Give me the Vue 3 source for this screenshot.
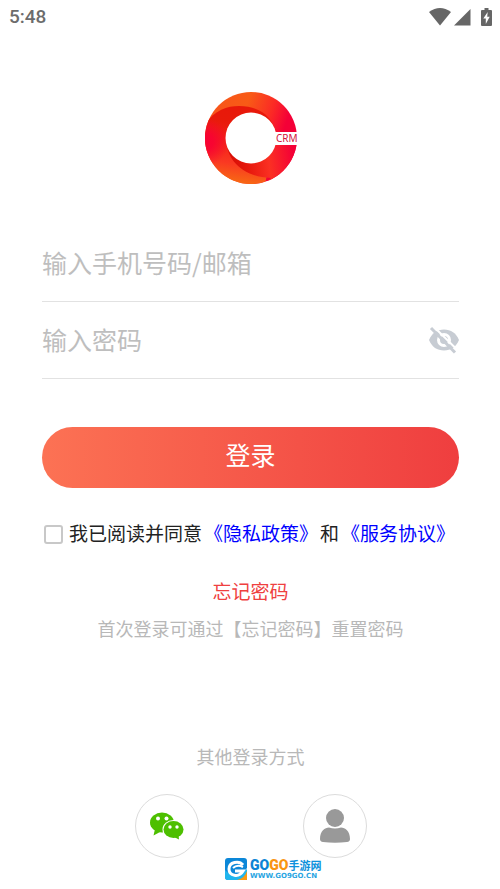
<script setup>
import { ref } from 'vue'

const account = ref('')
const password = ref('')
const visible = ref(false)
const agreed = ref(false)
</script>

<template>
  <div class="page">
    <header class="status">
      <span class="time">5:48</span>
      <div class="status-icons">
        <svg width="22" height="18" viewBox="0 0 22 18" aria-hidden="true">
          <path d="M0 4Q11-4 22 4L11 17.500Z" />
        </svg>
        <svg width="17" height="18" viewBox="0 0 17 18" aria-hidden="true">
          <path d="M16.500 1V17.500H0Z" />
        </svg>
        <svg class="battery" width="11" height="18" viewBox="0 0 11 18" aria-hidden="true">
          <path d="M3.500 0h4v2H10q1 0 1 1v14q0 1-1 1H1q-1 0-1-1V3q0-1 1-1h2.500Z" />
          <path class="bolt" d="M6.700 4 2.300 10.500h2.500V16L8.700 8.800H6.200Z" />
        </svg>
      </div>
    </header>

    <main class="content">
      <svg class="logo" width="92" height="92" viewBox="0 0 92 92" role="img" aria-label="CRM">
        <defs>
          <linearGradient id="ring" gradientUnits="userSpaceOnUse" x1="8" y1="20" x2="90" y2="46">
            <stop offset="0" stop-color="#f8551a" />
            <stop offset="0.350" stop-color="#f85b16" />
            <stop offset="0.650" stop-color="#fb2a25" />
            <stop offset="0.850" stop-color="#f40037" />
          </linearGradient>
          <linearGradient id="left" gradientUnits="userSpaceOnUse" x1="46" y1="14" x2="36" y2="92">
            <stop offset="0" stop-color="#e8180a" />
            <stop offset="0.220" stop-color="#e81a0a" />
            <stop offset="0.480" stop-color="#f22018" />
            <stop offset="0.750" stop-color="#fa3822" />
            <stop offset="1" stop-color="#f76b13" />
          </linearGradient>
          <radialGradient id="edge" gradientUnits="userSpaceOnUse" cx="0" cy="50" r="24">
            <stop offset="0" stop-color="#f80034" />
            <stop offset="0.350" stop-color="#f80034" stop-opacity="0.850" />
            <stop offset="1" stop-color="#f80034" stop-opacity="0" />
          </radialGradient>
          <linearGradient id="right" gradientUnits="userSpaceOnUse" x1="26" y1="68" x2="88" y2="60">
            <stop offset="0" stop-color="#d80f06" />
            <stop offset="0.250" stop-color="#e6180c" />
            <stop offset="0.600" stop-color="#fb3023" />
            <stop offset="1" stop-color="#f40037" />
          </linearGradient>
          <clipPath id="disc"><circle cx="46" cy="46" r="46" /></clipPath>
        </defs>
        <g clip-path="url(#disc)">
          <rect width="92" height="92" fill="url(#ring)" />
          <path d="M0 32C10 18 22 14 34 14C55 14 67 25 71 40L60 92H0Z" fill="url(#left)" />
          <rect width="46" height="92" fill="url(#edge)" />
          <path d="M21 46C21 68 38 85 66 86L60 92H92V46Z" fill="url(#right)" />
        </g>
        <circle cx="46" cy="46" r="25.500" fill="#fff" />
        <path d="M68 40h24v13H68Z" fill="#fff" />
        <text class="logo-text" x="71" y="50">CRM</text>
      </svg>

      <form class="form" @submit.prevent>
        <div class="field">
          <input v-model="account" type="text" placeholder="输入手机号码/邮箱" aria-label="输入手机号码/邮箱" />
        </div>
        <div class="field">
          <input
            v-model="password"
            :type="visible ? 'text' : 'password'"
            placeholder="输入密码"
            aria-label="输入密码"
          />
          <button class="eye" type="button" aria-label="显示密码" @click="visible = !visible">
            <svg width="31" height="28" viewBox="0 0 31 28" aria-hidden="true">
              <path fill="#c7ccd3" d="M1 14C4 7 9 3.500 16 3.500S28 7 31 14C28 21 23 24.500 16 24.500S4 21 1 14Z" />
              <circle cx="16" cy="14" r="5.500" fill="none" stroke="#fff" stroke-width="3" />
              <path d="M5 0 30 24.500" stroke="#fff" stroke-width="2" />
              <path d="M3 2 27 26.500" stroke="#c7ccd3" stroke-width="3" />
            </svg>
          </button>
        </div>
        <button class="login" type="submit">登录</button>
        <div class="agreement">
          <input id="agree" v-model="agreed" type="checkbox" />
          <label for="agree">我已阅读并同意</label>
          <a href="#privacy">《隐私政策》</a>
          <span>和</span>
          <a href="#service">《服务协议》</a>
        </div>
      </form>

      <a class="forgot" href="#forgot">忘记密码</a>
      <p class="hint">首次登录可通过【忘记密码】重置密码</p>

      <p class="other">其他登录方式</p>
      <div class="methods">
        <button type="button" aria-label="微信登录">
          <svg width="34" height="28" viewBox="0 0 34 28" aria-hidden="true">
            <g fill="#4dbf00">
              <ellipse cx="12" cy="10.500" rx="12" ry="10" />
              <path d="M5 17 3.500 23.500 10 20Z" />
            </g>
            <ellipse cx="23.500" cy="17.500" rx="11" ry="9.500" fill="#fff" />
            <g fill="#4dbf00">
              <ellipse cx="23.500" cy="17.500" rx="10" ry="8.500" />
              <path d="M24 25 29 27.500 28.500 23Z" />
            </g>
            <g fill="#fff">
              <circle cx="8" cy="6.500" r="2" />
              <circle cx="16.500" cy="6.500" r="2" />
              <circle cx="20" cy="15" r="1.700" />
              <circle cx="27" cy="15" r="1.700" />
            </g>
          </svg>
        </button>
        <button type="button" aria-label="账号登录">
          <svg width="30" height="34" viewBox="0 0 30 34" fill="#999" aria-hidden="true">
            <circle cx="15" cy="9" r="9" />
            <path d="M0 30C0 22 5 18.500 9 18.500Q15 20.500 21 18.500C25 18.500 30 22 30 30Q30 32.500 27 33Q15 34.500 3 33Q0 32.500 0 30Z" />
          </svg>
        </button>
      </div>
    </main>

    <div class="mark">
      <svg width="23" height="22" viewBox="0 0 23 22" aria-hidden="true">
        <path fill="#0c87d8" d="M3 0H19Q22 0 22 3V10L12 22H3Q0 22 0 19V3Q0 0 3 0Z" />
        <path fill="#20b5ed" d="M0 12Q9 22 22 11V19Q22 22 19 22H3Q0 22 0 19Z" />
        <path fill="none" stroke="#fff" stroke-width="3" d="M18 7C14 2 4 4 4 11C4 18 14 20 18 13H10" />
        <path fill="none" stroke="#fff" stroke-width="2" d="M8 10Q12 6 18 9" />
        <path fill="#f99a12" d="M22 13V22H12Q20 20 22 13Z" />
      </svg>
      <div class="mark-text">
        <div class="mark-name"><b class="blue">GO</b><b class="orange">GO</b><b class="cn">手游网</b></div>
        <div class="mark-url">WWW.GO9GO.CN</div>
      </div>
    </div>
  </div>
</template>

<style>
body {
  margin: 0;
  background: #fff;
}
</style>

<style scoped>
.page {
  position: relative;
  min-height: 100vh;
  box-sizing: border-box;
  font-family: "Noto Sans CJK SC", sans-serif;
  color: #222;
}

.status {
  display: flex;
  justify-content: space-between;
  align-items: center;
  height: 34px;
  padding: 0 8px 0 9px;
}

.time {
  font: 500 19px/24px Roboto, sans-serif;
  color: #6c6c6c;
}

.status-icons {
  display: flex;
  gap: 3px;
  fill: #666;
}

.battery {
  margin-left: 7px;
}

.bolt {
  fill: #fff;
}

.content {
  display: flex;
  flex-direction: column;
  align-items: center;
  padding: 58px 41px 30px 42px;
}

.logo {
  overflow: visible;
}

.logo-text {
  font: 10px "Noto Sans", sans-serif;
  fill: #d3123c;
}

.form {
  width: 100%;
  margin-top: 41px;
}

.field {
  display: flex;
  align-items: center;
  box-sizing: border-box;
  height: 77px;
  border-bottom: 1px solid #e2e2e2;
}

.field input {
  flex: 1;
  min-width: 0;
  height: 40px;
  padding: 0 0 2px;
  border: 0;
  outline: 0;
  background: none;
  font: 25px/38px "Noto Sans CJK SC", sans-serif;
  color: #222;
}

.field input::placeholder {
  color: #bebebe;
  opacity: 1;
}

button {
  padding: 0;
  border: 0;
  background: none;
  cursor: pointer;
}

.eye {
  display: flex;
}

.login {
  display: block;
  width: 100%;
  height: 61px;
  margin-top: 48px;
  padding-bottom: 8px;
  border-radius: 31px;
  background: linear-gradient(90deg, #fc7254, #ef3e3f);
  color: #fff;
  font: 25px/38px "Noto Sans CJK SC", sans-serif;
}

.agreement {
  display: flex;
  align-items: center;
  gap: 2px;
  height: 30px;
  margin-top: 30px;
  font-size: 19px;
  line-height: 28px;
  white-space: nowrap;
}

.agreement input {
  appearance: none;
  box-sizing: border-box;
  width: 19px;
  height: 19px;
  margin: 2px 4px 0 2px;
  border: 2px solid #c8c8c8;
  border-radius: 3px;
  background: #fff;
}

.agreement input:checked {
  background: #ef4444;
}

.agreement a {
  color: #0000ff;
  text-decoration: none;
}

.forgot {
  margin-top: 29px;
  font-size: 19px;
  line-height: 28px;
  color: #ef4040;
  text-decoration: none;
}

.hint,
.other {
  margin: 9px 0 0;
  font-size: 18px;
  line-height: 28px;
  color: #b8b8b8;
}

.other {
  margin-top: 100px;
}

.methods {
  display: flex;
  gap: 104px;
  margin-top: 24px;
}

.methods button {
  display: flex;
  align-items: center;
  justify-content: center;
  box-sizing: border-box;
  width: 64px;
  height: 64px;
  border: 1px solid #dcdcdc;
  border-radius: 50%;
}

.mark {
  position: absolute;
  bottom: 9px;
  left: 50%;
  display: flex;
  align-items: center;
  gap: 2px;
  margin-left: -25px;
  white-space: nowrap;
}

.mark-text {
  display: flex;
  flex-direction: column;
}

.mark-name {
  display: flex;
  align-items: center;
  height: 16px;
  font: 900 14px/16px Roboto, sans-serif;
}

.blue {
  color: #0d84d5;
}

.orange {
  color: #f99513;
}

.cn {
  font: bold 11px/16px "Noto Sans CJK SC", sans-serif;
  color: #0d91dc;
}

.mark-url {
  font: bold 7px/7px "DejaVu Sans", sans-serif;
  color: #2aa5e2;
}
</style>
